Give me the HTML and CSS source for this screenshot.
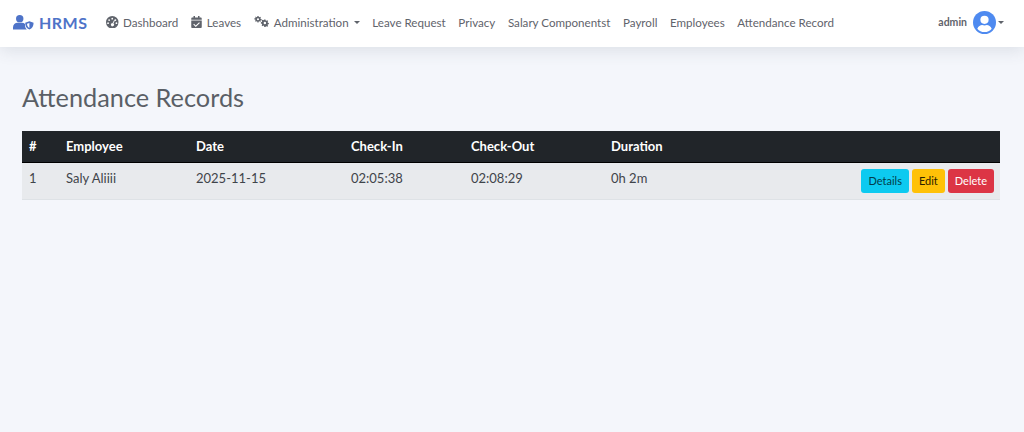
FILE: index.html
```html
<!DOCTYPE html>
<html lang="en">
<head>
<meta charset="utf-8">
<title>Attendance Records</title>
<link rel="stylesheet" href="styles.css">
</head>
<body>
<nav class="navbar">
  <a class="brand">
    <svg class="brand-icon" viewBox="0 0 25 18"><circle cx="8" cy="5" r="4.4"/><path d="M0 18v-2.500C0 12 2.500 10 5.500 10h5c1.500 0 2.800.5 3.800 1.300-.3 2.800.6 5 2.200 6.700z"/><path fill-rule="evenodd" d="M19.500 8l5 1.800c0 4-1.500 7-5 8.200-3.500-1.200-5-4.200-5-8.200zm0 2.200l-2.800 1c.1 2.400.9 4 2.800 4.800z"/></svg>
    <span>HRMS</span>
  </a>
  <ul class="nav-links">
    <li><svg class="nav-icon" viewBox="1 1 14 14"><path fill-rule="evenodd" d="M8 1a7 7 0 1 1 0 14A7 7 0 0 1 8 1zM8 3a1 1 0 1 0 0 2 1 1 0 0 0 0-2zM4.500 4.500a1 1 0 1 0 0 2 1 1 0 0 0 0-2zM11.500 4.500a1 1 0 1 0 0 2 1 1 0 0 0 0-2zM3.300 8a1 1 0 1 0 0 2 1 1 0 0 0 0-2zM12.700 8a1 1 0 1 0 0 2 1 1 0 0 0 0-2zM10.300 5.300L8.300 9.100a1.700 1.700 0 1 0 1 .4l1.800-3.800z"/></svg>Dashboard</li>
    <li><svg class="nav-icon cal" viewBox="0 0 14 16"><path fill-rule="evenodd" d="M3 0h2v2h4V0h2v2h1.500C13.300 2 14 2.700 14 3.500V5H0V3.500C0 2.700.7 2 1.500 2H3zM0 6h14v8.500c0 .8-.7 1.500-1.500 1.500h-11C.7 16 0 15.300 0 14.500zm10.500 2.300L6 12.500 3.700 10.300l-1 1L6 14.500l5.500-5.200z"/></svg>Leaves</li>
    <li><svg class="nav-icon wide" viewBox="0 0 20 16"><path fill-rule="evenodd" d="M5 0h2l.3 1.600 1.400.6L10 1.300l1.400 1.400-.9 1.300.6 1.400 1.600.3v2l-1.600.3-.6 1.400.9 1.300L10 10.700l-1.300-.9-1.400.6L7 12H5l-.3-1.600-1.400-.6-1.300.9L.6 9.300l.9-1.300-.6-1.400L-.7 6.300v-2l1.600-.3.6-1.400-.9-1.300L2 1.300l1.300.9 1.400-.6zM6 4a2 2 0 1 0 0 4 2 2 0 0 0 0-4z" transform="translate(1 0) scale(.72)"/><path fill-rule="evenodd" d="M14 5h2l.3 1.500 1.300.6 1.300-.9 1.400 1.400-.9 1.300.6 1.300 1.500.3v2l-1.500.3-.6 1.300.9 1.300-1.400 1.400-1.300-.9-1.300.6L16 17h-2l-.3-1.500-1.300-.6-1.300.9-1.400-1.400.9-1.300-.6-1.300L8.500 11.500v-2l1.500-.3.6-1.300-.9-1.300 1.400-1.400 1.300.9 1.300-.6z M15 8.500a2 2 0 1 0 0 4 2 2 0 0 0 0-4z" transform="translate(2.200 .6) scale(.82)"/></svg>Administration<i class="caret"></i></li>
    <li>Leave Request</li>
    <li>Privacy</li>
    <li>Salary Componentst</li>
    <li>Payroll</li>
    <li>Employees</li>
    <li>Attendance Record</li>
  </ul>
  <div class="user">
    <span class="user-name">admin</span>
    <svg class="avatar" viewBox="0 0 24 24"><circle cx="12" cy="12" r="12" fill="#4e8af0"/><circle cx="12" cy="9.200" r="4.300" fill="#fff"/><path fill="#fff" d="M4.500 18.500c1-2.600 3.200-3.800 5-3.800.8.300 1.600.5 2.500.5s1.700-.2 2.500-.5c1.800 0 4 1.200 5 3.800-1.800 2.200-4.500 3.500-7.500 3.500s-5.700-1.300-7.500-3.500z"/></svg>
    <i class="caret"></i>
  </div>
</nav>
<main class="content">
  <h1>Attendance Records</h1>
  <table class="records">
    <colgroup>
      <col class="c-num"><col class="c-emp"><col class="c-date"><col class="c-in"><col class="c-out"><col class="c-dur"><col>
    </colgroup>
    <thead>
      <tr><th>#</th><th>Employee</th><th>Date</th><th>Check-In</th><th>Check-Out</th><th>Duration</th><th></th></tr>
    </thead>
    <tbody>
      <tr>
        <td>1</td><td>Saly Aliiii</td><td>2025-11-15</td><td>02:05:38</td><td>02:08:29</td><td>0h 2m</td>
        <td class="actions">
          <span class="btn btn-info">Details</span><span class="btn btn-warning">Edit</span><span class="btn btn-danger">Delete</span>
        </td>
      </tr>
    </tbody>
  </table>
</main>
</body>
</html>
```
FILE: styles.css
```css
* { box-sizing: border-box; }
html, body { height: 100%; }
body {
  margin: 0;
  background: #f4f6fb;
  font-family: Lato, "Open Sans", sans-serif;
  color: #212529;
  overflow: hidden;
}
.navbar {
  height: 47px;
  background: #fff;
  display: flex;
  align-items: center;
  padding: 0 20px 3px 13px;
  box-shadow: 0 4px 16px rgba(60, 70, 90, .12);
}
.brand {
  display: flex;
  align-items: center;
  gap: 5px;
  color: #4e73c8;
  font-size: 16px;
  font-weight: 700;
  letter-spacing: .5px;
  margin-right: 18.500px;
}
.brand-icon { width: 21px; height: 16px; fill: #4e73c8; }
.nav-links {
  display: flex;
  list-style: none;
  margin: 0;
  padding: 0;
  gap: 12.600px;
  font-size: 11.600px;
  color: #5f636b;
  flex: 1;
}
.nav-links li { display: flex; align-items: center; white-space: nowrap; }
.nav-icon { width: 12.500px; height: 12.500px; fill: #5f636b; margin-right: 4.500px; }
.nav-icon.cal { width: 11px; height: 12px; margin-right: 5px; }
.nav-icon.wide { width: 15px; height: 12px; margin-right: 5px; }
.caret {
  display: inline-block;
  border-top: 3px solid #5f636b;
  border-left: 3px solid transparent;
  border-right: 3px solid transparent;
  margin-left: 5px;
}
.user { display: flex; align-items: center; color: #5f636b; }
.user-name { font-size: 10.500px; font-weight: 700; margin-right: 6px; }
.avatar { width: 23px; height: 23px; }
.user .caret { margin-left: 2px; }
.content { padding: 34px 24px 0 22px; }
h1 {
  margin: 0 0 17px;
  font-size: 25.300px;
  line-height: 33px;
  font-weight: 400;
  color: #5a5f66;
}
.records {
  width: 100%;
  border-collapse: collapse;
  table-layout: fixed;
  font-size: 13px;
}
.c-num { width: 37px; }
.c-emp { width: 130px; }
.c-date { width: 155px; }
.c-in { width: 120px; }
.c-out { width: 140px; }
.c-dur { width: 140px; }
.records th {
  background: #212529;
  color: #fff;
  height: 31px;
  padding: 0 7px;
  text-align: left;
  font-weight: 700;
  border-bottom: 1px solid #000;
}
.records td {
  background: #e8eaed;
  height: 37px;
  padding: 7px 7px 0;
  vertical-align: top;
  color: #3f444a;
  border-bottom: 1px solid #dee2e6;
}
.records td.actions { text-align: right; padding: 6px 6px 0 0; white-space: nowrap; }
.btn {
  display: inline-block;
  height: 24px;
  line-height: 24px;
  padding: 0 7px;
  border-radius: 3px;
  font-size: 11px;
  margin-left: 3px;
}
.btn-info { background: #0dcaf0; color: #033c4a; }
.btn-warning { background: #ffc107; color: #2a2000; }
.btn-danger { background: #dc3545; color: #fff; }
```
